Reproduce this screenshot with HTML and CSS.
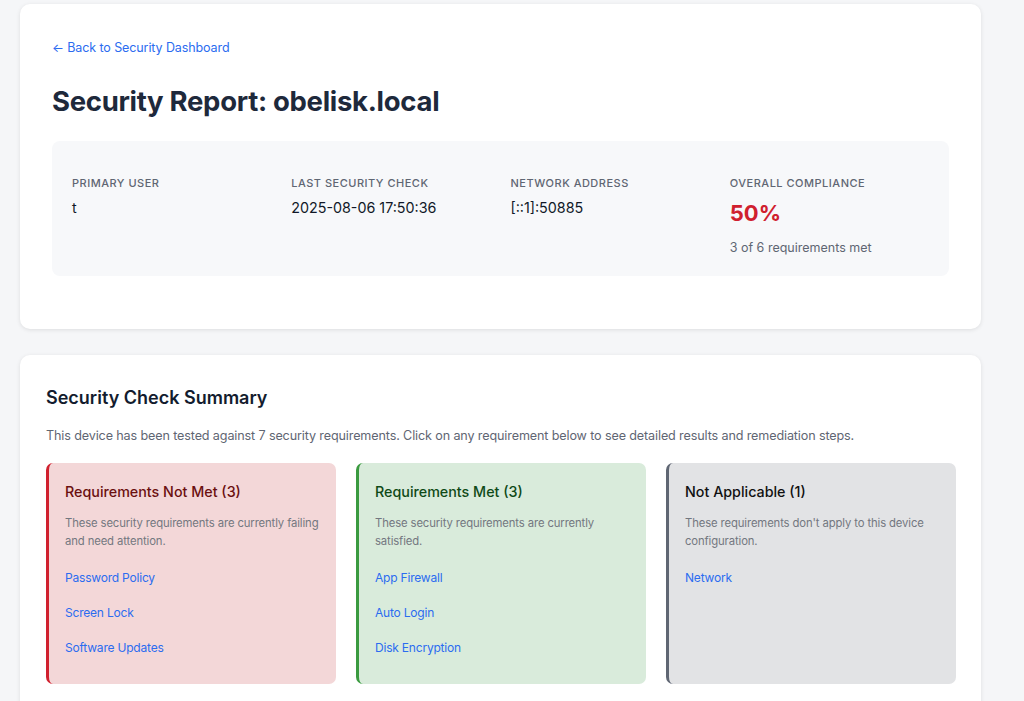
FILE: index.html
```html
<!DOCTYPE html>
<html lang="en">
<head>
<meta charset="utf-8">
<title>Security Report: obelisk.local</title>
<link rel="stylesheet" href="styles.css">
</head>
<body>
<main class="page">
  <section class="card header-card">
    <a class="back-link" href="#">← Back to Security Dashboard</a>
    <h1 class="title">Security Report: obelisk.local</h1>
    <div class="info-box">
      <div class="info-item">
        <div class="info-label">Primary User</div>
        <div class="info-value">t</div>
      </div>
      <div class="info-item">
        <div class="info-label">Last Security Check</div>
        <div class="info-value">2025-08-06 17:50:36</div>
      </div>
      <div class="info-item">
        <div class="info-label">Network Address</div>
        <div class="info-value">[::1]:50885</div>
      </div>
      <div class="info-item">
        <div class="info-label">Overall Compliance</div>
        <div class="compliance">50%</div>
        <div class="compliance-sub">3 of 6 requirements met</div>
      </div>
    </div>
  </section>

  <section class="card summary-card">
    <h2 class="summary-title">Security Check Summary</h2>
    <p class="summary-desc">This device has been tested against 7 security requirements. Click on any requirement below to see detailed results and remediation steps.</p>
    <div class="groups">
      <div class="group group-fail">
        <h3 class="group-title">Requirements Not Met (3)</h3>
        <p class="group-desc">These security requirements are currently failing and need attention.</p>
        <ul class="group-list">
          <li><a href="#">Password Policy</a></li>
          <li><a href="#">Screen Lock</a></li>
          <li><a href="#">Software Updates</a></li>
        </ul>
      </div>
      <div class="group group-pass">
        <h3 class="group-title">Requirements Met (3)</h3>
        <p class="group-desc">These security requirements are currently satisfied.</p>
        <ul class="group-list">
          <li><a href="#">App Firewall</a></li>
          <li><a href="#">Auto Login</a></li>
          <li><a href="#">Disk Encryption</a></li>
        </ul>
      </div>
      <div class="group group-na">
        <h3 class="group-title">Not Applicable (1)</h3>
        <p class="group-desc">These requirements don't apply to this device configuration.</p>
        <ul class="group-list">
          <li><a href="#">Network</a></li>
        </ul>
      </div>
    </div>
  </section>
</main>
</body>
</html>
```

FILE: styles.css
```css
* { box-sizing: border-box; }

html, body {
  margin: 0;
  padding: 0;
  background: #f5f6f8;
  font-family: Inter, "Noto Sans", "Liberation Sans", sans-serif;
  color: #1f2937;
}

.page {
  width: 961px;
  margin-left: 20px;
  padding-top: 4px;
  display: flex;
  flex-direction: column;
  gap: 26px;
}

.card {
  background: #ffffff;
  border-radius: 10px;
  box-shadow: 0 1px 4px rgba(0, 0, 0, 0.10);
}

.header-card {
  padding: 35px 32px 53px;
}

.back-link {
  display: block;
  font-size: 12.5px;
  line-height: 18px;
  letter-spacing: -0.1px;
  color: #2b6cf0;
  text-decoration: none;
}

.title {
  margin: 26px 0 22px;
  font-size: 27.5px;
  line-height: 36px;
  font-weight: 700;
  letter-spacing: -0.3px;
  color: #1e293b;
}

.info-box {
  background: #f7f8fa;
  border-radius: 8px;
  padding: 34px 20px 19px;
  display: grid;
  grid-template-columns: repeat(4, 1fr);
  column-gap: 20px;
}

.info-label {
  font-size: 11px;
  line-height: 16px;
  font-weight: 500;
  letter-spacing: 0.5px;
  text-transform: uppercase;
  color: #5f6673;
  margin-bottom: 7px;
}

.info-value {
  font-size: 14.3px;
  line-height: 20px;
  color: #111827;
}

.compliance {
  font-size: 22px;
  line-height: 28px;
  font-weight: 700;
  color: #d0202e;
  margin-top: 8px;
}

.compliance-sub {
  margin-top: 12px;
  font-size: 12.5px;
  line-height: 18px;
  color: #5f6673;
}

.summary-card {
  padding: 31px 25px 40px 26px;
}

.summary-title {
  margin: 0;
  font-size: 18px;
  line-height: 24px;
  font-weight: 600;
  color: #131c2e;
}

.summary-desc {
  margin: 16px 0 17px;
  font-size: 12.6px;
  line-height: 20px;
  letter-spacing: -0.13px;
  color: #5f6673;
}

.groups {
  display: grid;
  grid-template-columns: repeat(3, 1fr);
  column-gap: 20px;
}

.group {
  border-radius: 7px;
  border-left: 3px solid;
  padding: 19px 12px 26px 16px;
  min-height: 221px;
}

.group-fail { background: #f3d7d8; border-left-color: #d0202e; }
.group-pass { background: #d9ebdb; border-left-color: #3a9a3f; }
.group-na   { background: #e2e3e5; border-left-color: #5f6673; }

.group-title {
  margin: 0;
  font-size: 14.3px;
  line-height: 20px;
  font-weight: 500;
}

.group-fail .group-title { color: #6b1010; }
.group-pass .group-title { color: #0f4a17; }
.group-na .group-title { color: #111111; }

.group-desc {
  margin: 12px 0 19px;
  font-size: 11.3px;
  line-height: 18px;
  letter-spacing: -0.12px;
  color: #737780;
}

.group-list {
  list-style: none;
  margin: 0;
  padding: 0;
  display: flex;
  flex-direction: column;
  gap: 17px;
}

.group-list li {
  font-size: 12px;
  line-height: 18px;
  letter-spacing: -0.2px;
}

.group-list a {
  color: #2b6cf0;
  text-decoration: none;
}
```
